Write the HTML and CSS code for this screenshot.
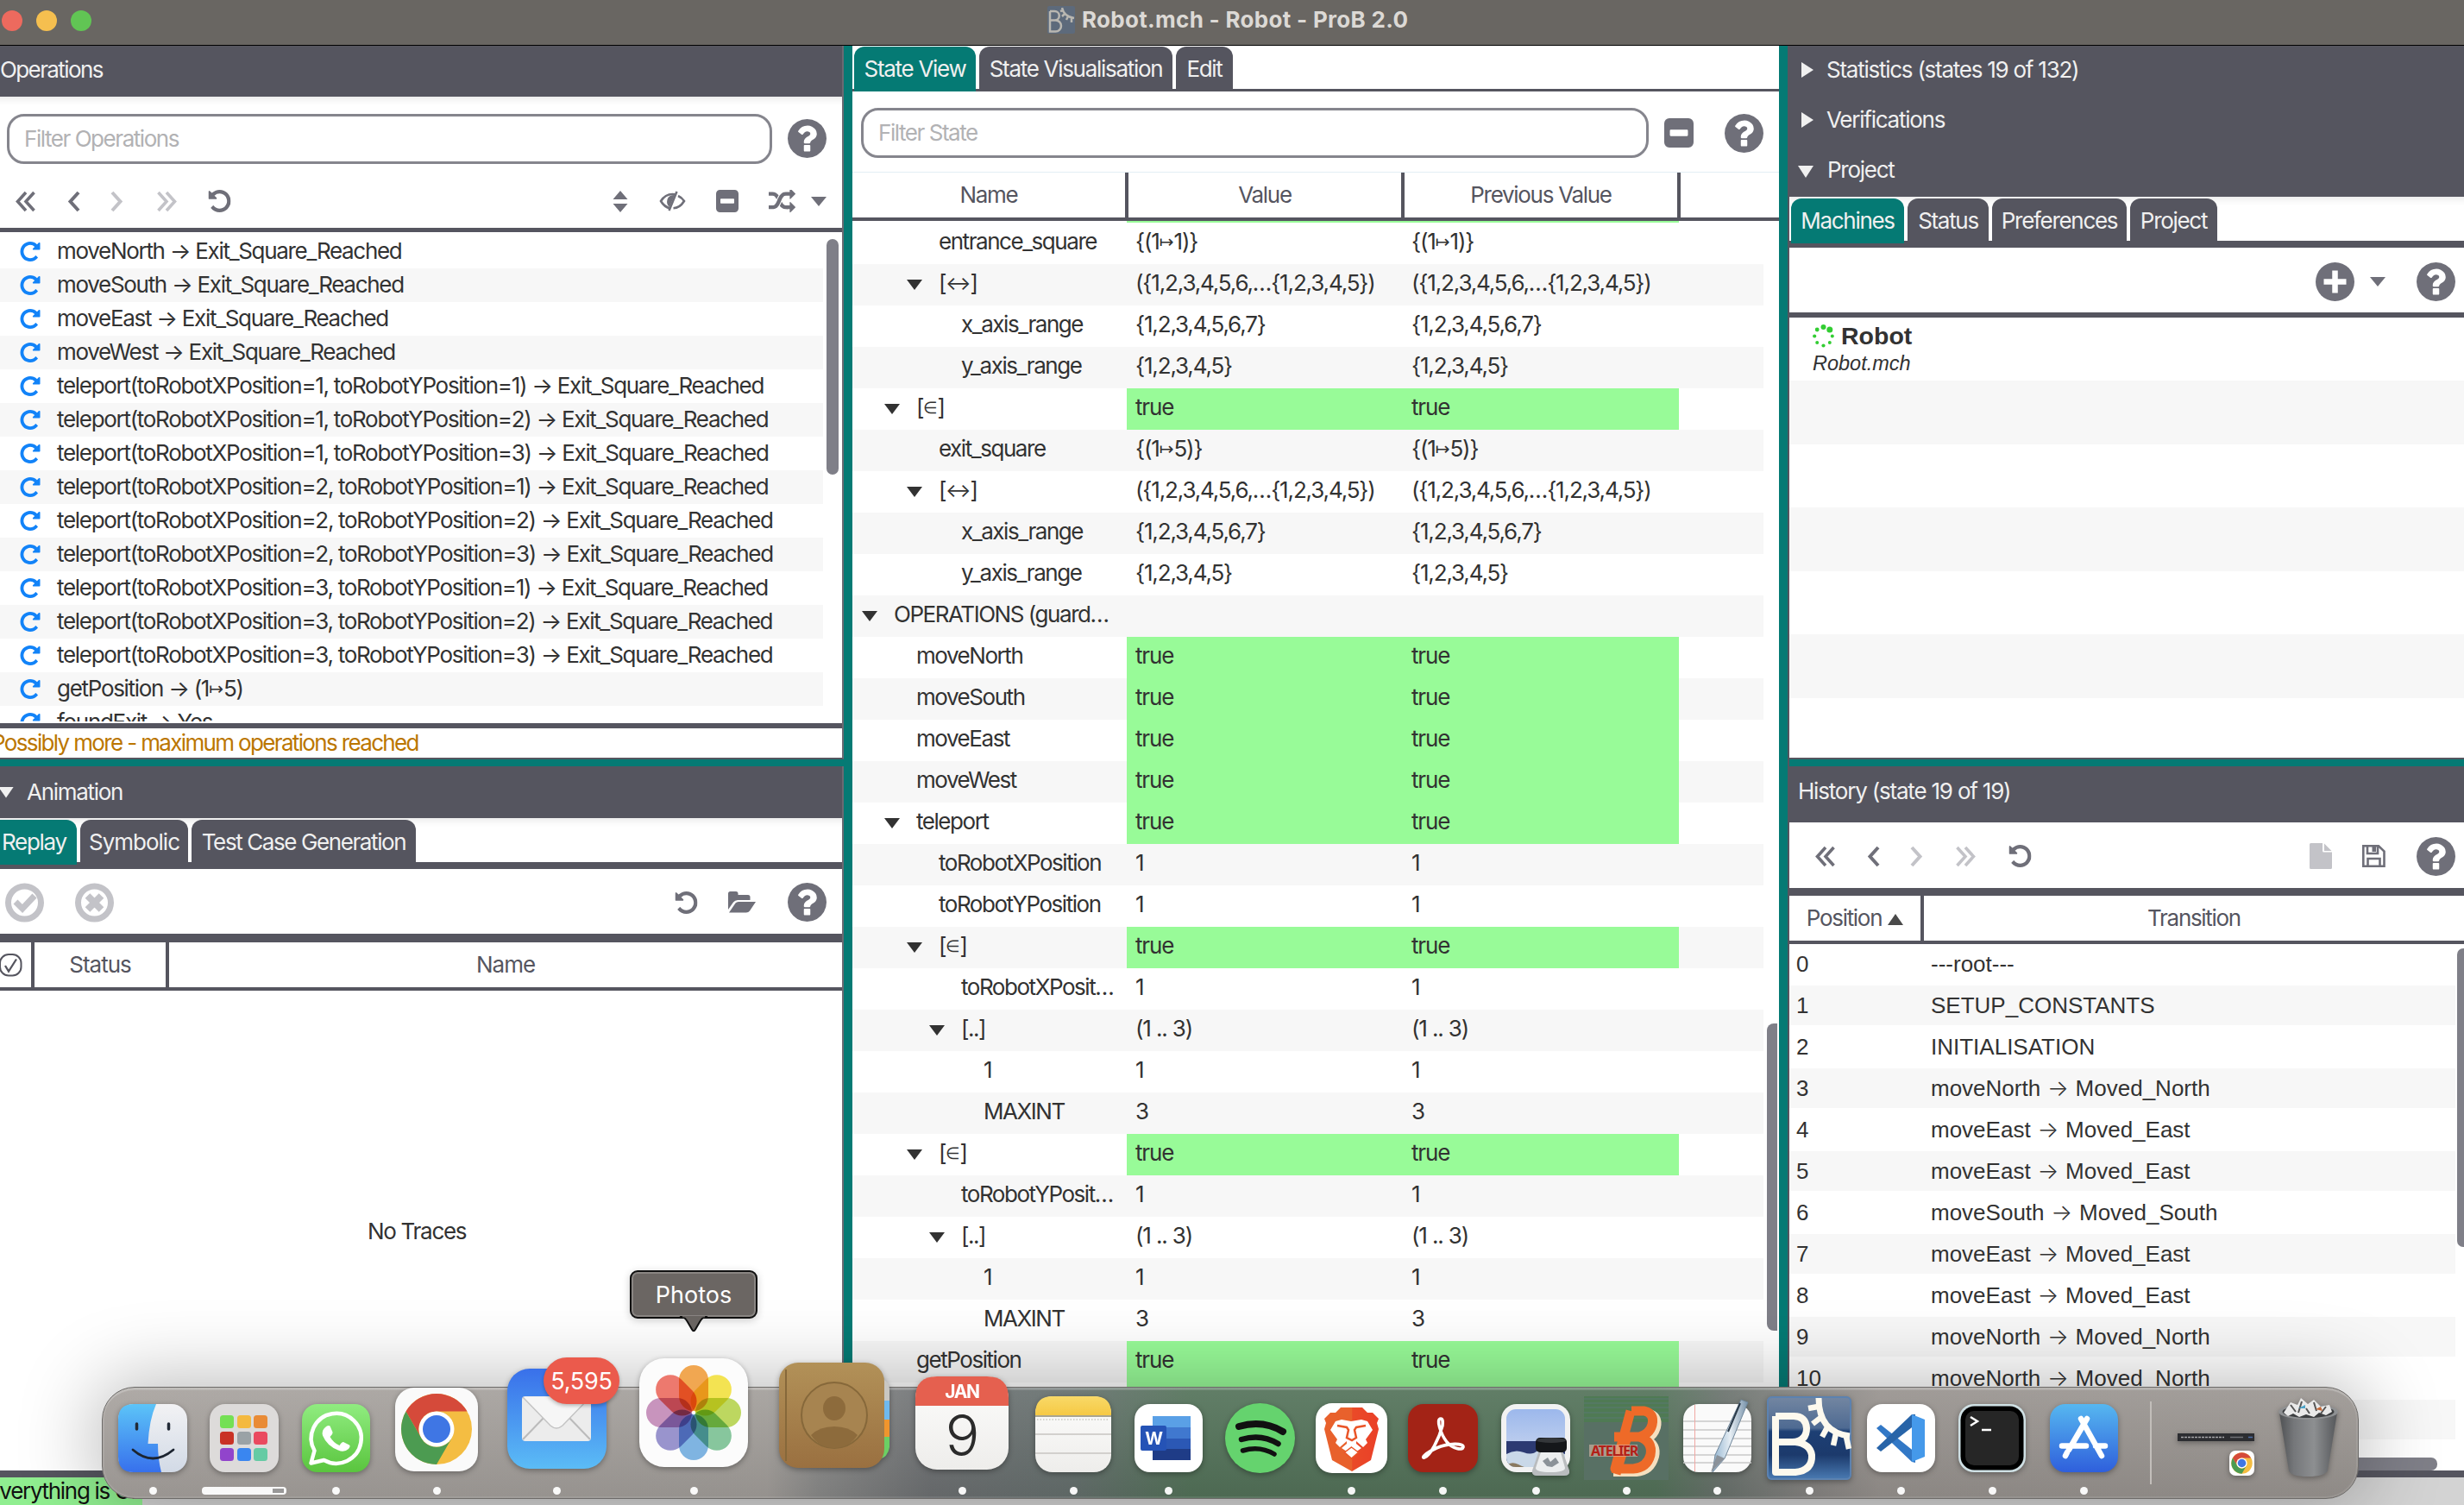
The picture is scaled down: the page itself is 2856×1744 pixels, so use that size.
FILE: index.html
```html
<!DOCTYPE html>
<html lang="en">
<head>
<meta charset="utf-8">
<title>Robot.mch - Robot - ProB 2.0</title>
<link rel="stylesheet" href="styles.css">
</head>
<body>
<svg class="defs" width="0" height="0" aria-hidden="true">
  <defs>
    <symbol id="help" viewBox="128 128 1536 1536"><path fill-rule="evenodd" d="M1024 1376v-192q0-14-9-23t-23-9h-192q-14 0-23 9t-9 23v192q0 14 9 23t23 9h192q14 0 23-9t9-23zm256-672q0-88-55.500-163t-138.500-116-170-41q-243 0-371 213-15 24 8 42l132 100q7 6 19 6 16 0 25-12 53-68 86-92 34-24 86-24 48 0 85.500 26t37.500 59q0 38-20 61t-68 45q-63 28-115.500 86.500t-52.500 125.500v36q0 14 9 23t23 9h192q14 0 23-9t9-23q0-19 21.500-49.500t54.500-49.500q32-18 49-28.500t46-35 44.500-48 28-60.500 12.500-81zm384 192q0 209-103 385.500t-279.500 279.500-385.500 103-385.500-103-279.500-279.500-103-385.500 103-385.500 279.500-279.500 385.500-103 385.500 103 279.500 279.500 103 385.500z"/></symbol>
    <symbol id="repeat" viewBox="128 128 1536 1536"><path d="M1664 256v448q0 26-19 45t-45 19h-448q-42 0-59-40-17-39 14-69l138-138q-148-137-349-137-104 0-198.500 40.500t-163.500 109.500-109.500 163.500-40.500 198.500 40.500 198.500 109.500 163.500 163.500 109.500 198.500 40.500q119 0 225-52t179-147q7-10 23-12 15 0 25 9l137 138q9 8 9.500 20.500t-7.500 22.500q-109 132-264 204.500t-327 72.500q-156 0-298-61t-245-164-164-245-61-298 61-298 164-245 245-164 298-61q147 0 284.500 55.500t244.500 156.500l130-129q29-31 70-14 39 17 39 59z"/></symbol>
    <symbol id="undo" viewBox="0 0 26 26"><g transform="translate(26 0) scale(-1 1)"><use href="#repeat" width="26" height="26"/></g></symbol>
    <symbol id="shuffle" viewBox="0 128 1792 1536"><path d="M666 481q-60 92-137 273-22-45-37-72.500t-40.500-63.500-51-56.500-63-35-81.500-14.500h-224q-14 0-23-9t-9-23v-192q0-14 9-23t23-9h224q250 0 410 225zm1126 799q0 14-9 23l-320 320q-9 9-23 9-13 0-22.500-9.500t-9.500-22.500v-192q-32 0-85 .5t-81 1-73-1-71-5-64-10.500-63-18.500-58-28.500-59-40-55-53.500-56-69.500q59-93 136-273 22 45 37 72.500t40.500 63.500 51 56.500 63 35 81.500 14.500h256v-192q0-14 9-23t23-9q12 0 24 10l319 319q9 9 9 23zm0-896q0 14-9 23l-320 320q-9 9-23 9-13 0-22.500-9.500t-9.500-22.500v-192h-256q-48 0-87 15t-69 45-51 61.500-45 77.500q-32 62-78 171-29 66-49.500 111t-54 105-64 100-74 83-90 68.500-106.500 42-128 16.500h-224q-14 0-23-9t-9-23v-192q0-14 9-23t23-9h224q48 0 87-15t69-45 51-61.500 45-77.500q32-62 78-171 29-66 49.500-111t54-105 64-100 74-83 90-68.500 106.500-42 128-16.500h256v-192q0-14 9-23t23-9q12 0 24 10l319 319q9 9 9 23z"/></symbol>
    <symbol id="left" viewBox="0 0 15 25"><path d="M13 2 3.500 12.500 13 23" fill="none" stroke="currentColor" stroke-width="4"/></symbol>
    <symbol id="right" viewBox="0 0 15 25"><path d="M2 2 11.500 12.500 2 23" fill="none" stroke="currentColor" stroke-width="4"/></symbol>
    <symbol id="left2" viewBox="0 0 25 25"><path d="M13 2 3.500 12.500 13 23M22.500 2 13 12.500 22.500 23" fill="none" stroke="currentColor" stroke-width="3.600"/></symbol>
    <symbol id="right2" viewBox="0 0 25 25"><path d="M12 2 21.500 12.500 12 23M2.500 2 12 12.500 2.500 23" fill="none" stroke="currentColor" stroke-width="3.600"/></symbol>
    <symbol id="minus" viewBox="0 0 26 26"><path fill-rule="evenodd" d="M4.500 0h17A4.500 4.500 0 0 1 26 4.500v17a4.500 4.500 0 0 1-4.500 4.500h-17A4.500 4.500 0 0 1 0 21.500v-17A4.500 4.500 0 0 1 4.500 0ZM5 11v4q0 .8.8.8h14.400q.8 0 .8-.8v-4q0-.8-.8-.8H5.800q-.8 0-.8.800Z"/></symbol>
    <symbol id="chrome" viewBox="0 0 84 84">
      <circle cx="42" cy="42" r="41" fill="#f4bd42"/>
      <path d="M6.500 21.500A41 41 0 0 1 77.500 21.500H42A20.500 20.500 0 0 0 24.200 52.300Z" fill="#d54a3a"/>
      <path d="M6.500 21.500A41 41 0 0 0 42 83L59.800 52.300A20.500 20.500 0 0 1 24.200 52.300Z" fill="#4c9b51"/>
      <circle cx="42" cy="42" r="20.500" fill="#fff"/><circle cx="42" cy="42" r="16" fill="#3f76e4"/>
    </symbol>
    <linearGradient id="gFinder" x2="0" y2="1"><stop stop-color="#5cc4f8"/><stop offset="1" stop-color="#3770ec"/></linearGradient>
    <linearGradient id="gFace" x2="0" y2="1"><stop stop-color="#f2f2f4"/><stop offset="1" stop-color="#d2dae6"/></linearGradient>
    <linearGradient id="gWhats" x2="0" y2="1"><stop stop-color="#90ec80"/><stop offset="1" stop-color="#5ac53e"/></linearGradient>
    <linearGradient id="gMail" x2="0" y2="1"><stop stop-color="#3970ea"/><stop offset="1" stop-color="#5bbcf6"/></linearGradient>
    <linearGradient id="gWood" x2="0" y2="1"><stop stop-color="#b29158"/><stop offset="1" stop-color="#9a7040"/></linearGradient>
    <linearGradient id="gPaper" x2="0" y2="1"><stop stop-color="#fdfdfc"/><stop offset="1" stop-color="#eeedeb"/></linearGradient>
    <linearGradient id="gNote" x2="0" y2="1"><stop stop-color="#f8d968"/><stop offset="1" stop-color="#f6c944"/></linearGradient>
    <linearGradient id="gLion"><stop stop-color="#e8612c"/><stop offset=".5" stop-color="#e8612c"/><stop offset=".52" stop-color="#ea4a28"/><stop offset="1" stop-color="#ea4028"/></linearGradient>
    <linearGradient id="gSky" x2="0" y2="1"><stop stop-color="#9cb8ec"/><stop offset="1" stop-color="#bccdee"/></linearGradient>
    <linearGradient id="gProb" x2="0" y2="1"><stop stop-color="#7487a2"/><stop offset=".38" stop-color="#4e6a92"/><stop offset=".42" stop-color="#1d3f74"/><stop offset=".7" stop-color="#1c3a6c"/><stop offset="1" stop-color="#4b7cb4"/></linearGradient>
    <linearGradient id="gStore" x2="0" y2="1"><stop stop-color="#56b7f0"/><stop offset="1" stop-color="#2f5fdc"/></linearGradient>
    <linearGradient id="gBin"><stop stop-color="#4f5153"/><stop offset=".25" stop-color="#75777a"/><stop offset=".6" stop-color="#8d8f91"/><stop offset="1" stop-color="#55575a"/></linearGradient>
    <linearGradient id="gPen"><stop stop-color="#8fb2cf"/><stop offset=".5" stop-color="#e6eef4"/><stop offset="1" stop-color="#7590a8"/></linearGradient>
  </defs>
</svg>

<header class="titlebar">
  <div class="lights"><i class="red"></i><i class="yellow"></i><i class="green"></i></div>
  <div class="title">
    <svg width="32" height="32" viewBox="0 0 32 32"><rect width="32" height="32" rx="2" fill="#5d6a7b"/><path d="M3 6V29.500H9.500A6.500 6.500 0 0 0 9.500 16.500H3M8.500 16.500A5 5 0 0 0 8.500 6H3" fill="none" stroke="#b9b7b1" stroke-width="2.500"/><path d="M17 2q2 10 14 12M18 5l-3 1M20 9l-3 3M24 12l-2 4M28 14l0 5" stroke="#b9b7b1" stroke-width="2.500" fill="none"/></svg>
    <span>Robot.mch - Robot - ProB 2.0</span>
  </div>
</header>

<main class="main">
  <div class="col left">
    <section class="ops">
      <div class="head plain">Operations</div>
      <div class="filter ops-filter"><div class="input">Filter Operations</div><svg class="ic" width="45" height="45"><use href="#help"/></svg></div>
      <div class="ops-tools ic">
        <svg width="25" height="25"><use href="#left2"/></svg>
        <svg width="15" height="25"><use href="#left"/></svg>
        <svg class="off" width="15" height="25"><use href="#right"/></svg>
        <svg class="off" width="25" height="25"><use href="#right2"/></svg>
        <svg width="27" height="26"><use href="#undo"/></svg>
        <svg width="18" height="25" viewBox="0 0 18 25"><path d="M9 0 17.500 10H.5ZM9 25 17.500 15H.5Z"/></svg>
        <svg width="31" height="24" viewBox="0 0 31 24"><path d="M13 20.500Q6 19 2 12 7 4 15.500 4 17 4 18 4.200M22 6Q26.500 8 29 12 24 20 16.500 20.300M20.500 1 11.500 23" fill="none" stroke="currentColor" stroke-width="2.600"/><path d="M18 5 12 19Q8 16 9.500 10 11 5 18 5Z"/></svg>
        <svg width="26" height="26"><use href="#minus"/></svg>
        <svg width="31" height="27"><use href="#shuffle"/></svg>
        <svg width="18" height="11" viewBox="0 0 18 11"><path d="M0 0H18L9 11Z"/></svg>
      </div>
      <div class="ops-list">
        <div class="rows">
          <div><svg><use href="#repeat"/></svg>moveNorth → Exit_Square_Reached</div>
          <div><svg><use href="#repeat"/></svg>moveSouth → Exit_Square_Reached</div>
          <div><svg><use href="#repeat"/></svg>moveEast → Exit_Square_Reached</div>
          <div><svg><use href="#repeat"/></svg>moveWest → Exit_Square_Reached</div>
          <div><svg><use href="#repeat"/></svg>teleport(toRobotXPosition=1, toRobotYPosition=1) → Exit_Square_Reached</div>
          <div><svg><use href="#repeat"/></svg>teleport(toRobotXPosition=1, toRobotYPosition=2) → Exit_Square_Reached</div>
          <div><svg><use href="#repeat"/></svg>teleport(toRobotXPosition=1, toRobotYPosition=3) → Exit_Square_Reached</div>
          <div><svg><use href="#repeat"/></svg>teleport(toRobotXPosition=2, toRobotYPosition=1) → Exit_Square_Reached</div>
          <div><svg><use href="#repeat"/></svg>teleport(toRobotXPosition=2, toRobotYPosition=2) → Exit_Square_Reached</div>
          <div><svg><use href="#repeat"/></svg>teleport(toRobotXPosition=2, toRobotYPosition=3) → Exit_Square_Reached</div>
          <div><svg><use href="#repeat"/></svg>teleport(toRobotXPosition=3, toRobotYPosition=1) → Exit_Square_Reached</div>
          <div><svg><use href="#repeat"/></svg>teleport(toRobotXPosition=3, toRobotYPosition=2) → Exit_Square_Reached</div>
          <div><svg><use href="#repeat"/></svg>teleport(toRobotXPosition=3, toRobotYPosition=3) → Exit_Square_Reached</div>
          <div><svg><use href="#repeat"/></svg>getPosition → (1<span class="map">↦</span>5)</div>
          <div><svg><use href="#repeat"/></svg>foundExit → Yes</div>
        </div>
        <div class="thumb"></div>
      </div>
      <div class="warn"><span>Possibly more - maximum operations reached</span></div>
    </section>
    <section class="anim">
      <div class="head open">Animation</div>
      <nav class="tabs anim-tabs"><span class="on">Replay</span><span>Symbolic</span><span>Test Case Generation</span></nav>
      <div class="anim-tools ic">
        <svg class="off" width="45" height="46" viewBox="0 0 45 46"><circle cx="22.500" cy="23" r="19" fill="none" stroke="currentColor" stroke-width="7"/><path d="m12 22 8 8 14-15" fill="none" stroke="currentColor" stroke-width="7"/></svg>
        <svg class="off" width="45" height="46" viewBox="0 0 45 46"><circle cx="22.500" cy="23" r="19" fill="none" stroke="currentColor" stroke-width="7"/><path d="m14.500 15 16 16m0-16-16 16" fill="none" stroke="currentColor" stroke-width="8"/></svg>
        <svg width="27" height="26"><use href="#undo"/></svg>
        <svg width="32" height="25" viewBox="0 0 32 25"><path d="M0 21V2.500Q0 0 2.500 0H9q2.500 0 2.500 2.500V4H23q2.500 0 2.500 2.500V10H11Q8 10 6 12.500L0 21ZM1 24.500 8.500 13.500Q9.700 12 12 12H32L25 22.500Q23.500 24.500 21 24.500Z"/></svg>
        <svg width="45" height="45"><use href="#help"/></svg>
      </div>
      <div class="thead anim-head"><span><svg width="27" height="27" viewBox="0 0 27 27"><rect x="1" y="1" width="24.500" height="24.500" rx="10" fill="none" stroke="currentColor" stroke-width="2"/><path d="m7 14 4 6.500L20 6.500" fill="none" stroke="currentColor" stroke-width="2.300"/></svg></span><span>Status</span><span>Name</span></div>
      <div class="empty">No Traces</div>
    </section>
  </div>

  <div class="col center">
    <nav class="tabs state-tabs"><span class="on">State View</span><span>State Visualisation</span><span>Edit</span></nav>
    <div class="filter state-filter"><div class="input">Filter State</div><svg class="ic" width="34" height="34"><use href="#minus"/></svg><svg class="ic" width="45" height="45"><use href="#help"/></svg></div>
    <div class="thead state-head"><span>Name</span><span>Value</span><span>Previous Value</span></div>
    <div class="state">
      <div class="srows">
        <div class="l2"><b>entrance_square</b><i>{(1<span class="map">↦</span>1)}</i><i>{(1<span class="map">↦</span>1)}</i></div>
        <div class="l2 o"><b>[<span class="both">↔</span>]</b><i>({1,2,3,4,5,6,…{1,2,3,4,5})</i><i>({1,2,3,4,5,6,…{1,2,3,4,5})</i></div>
        <div class="l3"><b>x_axis_range</b><i>{1,2,3,4,5,6,7}</i><i>{1,2,3,4,5,6,7}</i></div>
        <div class="l3"><b>y_axis_range</b><i>{1,2,3,4,5}</i><i>{1,2,3,4,5}</i></div>
        <div class="l1 o t"><b>[<span class="sym">∈</span>]</b><i>true</i><i>true</i></div>
        <div class="l2"><b>exit_square</b><i>{(1<span class="map">↦</span>5)}</i><i>{(1<span class="map">↦</span>5)}</i></div>
        <div class="l2 o"><b>[<span class="both">↔</span>]</b><i>({1,2,3,4,5,6,…{1,2,3,4,5})</i><i>({1,2,3,4,5,6,…{1,2,3,4,5})</i></div>
        <div class="l3"><b>x_axis_range</b><i>{1,2,3,4,5,6,7}</i><i>{1,2,3,4,5,6,7}</i></div>
        <div class="l3"><b>y_axis_range</b><i>{1,2,3,4,5}</i><i>{1,2,3,4,5}</i></div>
        <div class="l0 o"><b>OPERATIONS (guard…</b></div>
        <div class="l1 t"><b>moveNorth</b><i>true</i><i>true</i></div>
        <div class="l1 t"><b>moveSouth</b><i>true</i><i>true</i></div>
        <div class="l1 t"><b>moveEast</b><i>true</i><i>true</i></div>
        <div class="l1 t"><b>moveWest</b><i>true</i><i>true</i></div>
        <div class="l1 o t"><b>teleport</b><i>true</i><i>true</i></div>
        <div class="l2"><b>toRobotXPosition</b><i>1</i><i>1</i></div>
        <div class="l2"><b>toRobotYPosition</b><i>1</i><i>1</i></div>
        <div class="l2 o t"><b>[<span class="sym">∈</span>]</b><i>true</i><i>true</i></div>
        <div class="l3"><b>toRobotXPosit…</b><i>1</i><i>1</i></div>
        <div class="l3 o"><b>[..]</b><i>(1 .. 3)</i><i>(1 .. 3)</i></div>
        <div class="l4"><b>1</b><i>1</i><i>1</i></div>
        <div class="l4"><b>MAXINT</b><i>3</i><i>3</i></div>
        <div class="l2 o t"><b>[<span class="sym">∈</span>]</b><i>true</i><i>true</i></div>
        <div class="l3"><b>toRobotYPosit…</b><i>1</i><i>1</i></div>
        <div class="l3 o"><b>[..]</b><i>(1 .. 3)</i><i>(1 .. 3)</i></div>
        <div class="l4"><b>1</b><i>1</i><i>1</i></div>
        <div class="l4"><b>MAXINT</b><i>3</i><i>3</i></div>
        <div class="l1 t"><b>getPosition</b><i>true</i><i>true</i></div>
        <div class="l1 t"><b></b><i></i><i></i></div>
        <div class="l1"></div>
        <div class="l1"></div>
      </div>
      <div class="track"><div class="thumb"></div></div>
    </div>
  </div>

  <div class="col right">
    <section class="project">
      <div class="accordion">
        <div class="shut">Statistics (states 19 of 132)</div>
        <div class="shut">Verifications</div>
        <div class="open">Project</div>
      </div>
      <nav class="tabs proj-tabs"><span class="on">Machines</span><span>Status</span><span>Preferences</span><span>Project</span></nav>
      <div class="proj-tools ic">
        <svg width="45" height="45" viewBox="0 0 45 45"><circle cx="22.500" cy="22.500" r="22.500"/><path d="M22.500 9.500v26M9.500 22.500h26" stroke="#fff" stroke-width="6.500"/></svg>
        <svg width="18" height="11" viewBox="0 0 18 11"><path d="M0 0H18L9 11Z"/></svg>
        <svg width="45" height="45"><use href="#help"/></svg>
      </div>
      <div class="machines">
        <div class="machine">
          <div class="mname"><svg width="25" height="27" viewBox="0 0 25 27" fill="#32cd32"><circle cx="12.500" cy="3" r="3"/><circle cx="19.800" cy="6" r="3.500"/><circle cx="22.800" cy="13.500" r="2"/><circle cx="19.800" cy="21" r="2"/><circle cx="12.500" cy="24.500" r="2.100"/><circle cx="5.200" cy="21" r="2"/><circle cx="2.200" cy="13.500" r="2.100"/><circle cx="5.200" cy="6" r="2.400"/></svg>Robot</div>
          <div class="mfile">Robot.mch</div>
        </div>
      </div>
    </section>
    <section class="history">
      <div class="head hist">History (state 19 of 19)</div>
      <div class="hist-tools ic">
        <svg width="25" height="25"><use href="#left2"/></svg>
        <svg width="15" height="25"><use href="#left"/></svg>
        <svg class="off" width="15" height="25"><use href="#right"/></svg>
        <svg class="off" width="25" height="25"><use href="#right2"/></svg>
        <svg width="27" height="26"><use href="#undo"/></svg>
        <svg class="off" width="26" height="30" viewBox="0 0 26 30"><path d="M0 1.500Q0 0 1.500 0H15v9q0 1.500 1.500 1.500H26V28.500q0 1.500-1.500 1.500h-23Q0 30 0 28.500ZM17 .5 25.500 9H17Z"/></svg>
        <svg width="27" height="26" viewBox="0 0 27 26"><path d="M1.300 1.300H19L25.500 7.500V24.700H1.300ZM6 1.500v8.500h12V1.500M6.500 24.500V16h14v8.500" fill="none" stroke="currentColor" stroke-width="2.600"/><path d="M11.500 2h4.500v6h-4.500z"/></svg>
        <svg width="45" height="45"><use href="#help"/></svg>
      </div>
      <div class="thead hist-head"><span>Position<svg width="18" height="13" viewBox="0 0 18 13"><path d="M9 0 18 13H0Z"/></svg></span><span>Transition</span></div>
      <div class="hist-body">
        <div class="hrows">
          <div><i>0</i>---root---</div>
          <div><i>1</i>SETUP_CONSTANTS</div>
          <div><i>2</i>INITIALISATION</div>
          <div><i>3</i>moveNorth <s>→</s> Moved_North</div>
          <div><i>4</i>moveEast <s>→</s> Moved_East</div>
          <div><i>5</i>moveEast <s>→</s> Moved_East</div>
          <div><i>6</i>moveSouth <s>→</s> Moved_South</div>
          <div><i>7</i>moveEast <s>→</s> Moved_East</div>
          <div><i>8</i>moveEast <s>→</s> Moved_East</div>
          <div><i>9</i>moveNorth <s>→</s> Moved_North</div>
          <div><i>10</i>moveNorth <s>→</s> Moved_North</div>
          <div></div>
          <div></div>
        </div>
        <div class="track"><div class="thumb"></div></div>
      </div>
      <div class="hscroll"><div></div></div>
    </section>
  </div>
</main>

<footer class="status"><span>Everything is OK 0</span></footer>

<div class="tip">Photos<svg width="36" height="20" viewBox="0 0 36 20"><path d="M2 0Q8 1 10.500 6L16 15.500Q18 19 20 15.500L25.500 6Q28 1 34 0" fill="#6b6663" stroke="#111" stroke-width="2"/><path d="M5 0H31" stroke="#6b6663" stroke-width="3"/></svg></div>

<div class="dock">
  <div class="app"><svg width="80" height="79" viewBox="0 0 80 79"><rect width="80" height="79" rx="18" fill="url(#gFace)"/><path d="M18 0H44Q36 18 34.500 46H46Q46 64 50 79H18Q0 79 0 61V18Q0 0 18 0Z" fill="url(#gFinder)"/><path d="M21.500 23v6M58.500 23v6" stroke="#222a36" stroke-width="3.500" stroke-linecap="round"/><path d="M17 53Q40 73 64 53" fill="none" stroke="#1c2430" stroke-width="2.800" stroke-linecap="round"/></svg><em></em></div>
  <div class="app"><svg width="80" height="79" viewBox="0 0 80 79"><rect width="80" height="79" rx="18" fill="#dddbda"/><g><rect x="12" y="13" width="16" height="15" rx="3.500" fill="#74e054"/><rect x="32" y="13" width="16" height="15" rx="3.500" fill="#f4b93f"/><rect x="51" y="13" width="16" height="15" rx="3.500" fill="#e98b36"/><rect x="12" y="32" width="16" height="15" rx="3.500" fill="#c93225"/><rect x="32" y="32" width="16" height="15" rx="3.500" fill="#9aa2a6"/><rect x="51" y="32" width="16" height="15" rx="3.500" fill="#ea4a5f"/><rect x="12" y="51" width="16" height="15" rx="3.500" fill="#9144cc"/><rect x="32" y="51" width="16" height="15" rx="3.500" fill="#3a86f0"/><rect x="51" y="51" width="16" height="15" rx="3.500" fill="#65cba4"/></g></svg><em class="progress"></em></div>
  <div class="app"><svg width="79" height="79" viewBox="0 0 79 79"><rect width="79" height="79" rx="18" fill="url(#gWhats)"/><path d="M10.500 68.500 14.500 54A29 29 0 1 1 25.500 65Z" fill="none" stroke="#fff" stroke-width="4.500" stroke-linejoin="round"/><path d="M27 27q3-3 5.500-1.500l3 7q.5 2-3 5.500 4 7 11 10 2.500-4 4.500-4l7 3.500q1.500 1.500-1 4.500-5 4.500-12 1.500-13-5-18-17-1.500-6 3-9.500Z" fill="#fff"/></svg><em></em></div>
  <div class="app r1"><svg width="96" height="97" viewBox="0 0 96 97"><rect width="96" height="97" rx="22" fill="#fafafa"/><use href="#chrome" x="6" y="6" width="84" height="84"/></svg><em></em></div>
  <div class="app r4"><svg width="115" height="116" viewBox="0 0 115 116"><rect width="115" height="116" rx="26" fill="url(#gMail)"/><rect x="17" y="32" width="80" height="52" rx="4" fill="#ececec"/><path d="m18 82 26-27M96 82 70 55" stroke="#bbb" stroke-width="2"/><path d="M18 33 50 66q7 6 14 0L96 33" fill="#f6f6f6" stroke="#c4c4c4" stroke-width="1.500"/></svg><span class="badge">5,595</span><em></em></div>
  <div class="app r6"><svg width="126" height="126" viewBox="-63 -63 126 126"><rect x="-63" y="-63" width="126" height="126" rx="29" fill="#fcfcfc"/><g class="petals">
    <rect x="-17" y="-55" width="34" height="53" rx="17" fill="#f29a33"/>
    <rect x="-17" y="-55" width="34" height="53" rx="17" fill="#f5e234" transform="rotate(45)"/>
    <rect x="-17" y="-55" width="34" height="53" rx="17" fill="#b4d445" transform="rotate(90)"/>
    <rect x="-17" y="-55" width="34" height="53" rx="17" fill="#74c08e" transform="rotate(135)"/>
    <rect x="-17" y="-55" width="34" height="53" rx="17" fill="#6ba9df" transform="rotate(180)"/>
    <rect x="-17" y="-55" width="34" height="53" rx="17" fill="#8a84c8" transform="rotate(225)"/>
    <rect x="-17" y="-55" width="34" height="53" rx="17" fill="#c283b5" transform="rotate(270)"/>
    <rect x="-17" y="-55" width="34" height="53" rx="17" fill="#ee6356" transform="rotate(315)"/></g></svg><em></em></div>
  <div class="app r5"><svg width="128" height="122" viewBox="0 0 128 122"><path d="M112 18q16 0 16 14v12h-16z" fill="#c9c7c2"/><path d="M112 44h16v22h-16z" fill="#6fb9ee"/><path d="M112 66h16v20h-16z" fill="#f0952d"/><path d="M112 86h16v12q-2 12-12 14z" fill="#6ccf64"/><rect width="122" height="122" rx="22" fill="url(#gWood)"/><path d="M8 8v106" stroke="#86683a" stroke-width="2"/><circle cx="64" cy="61" r="38" fill="#a78450" stroke="#86683a" stroke-width="2"/><ellipse cx="64" cy="53" rx="13" ry="14" fill="#8d6b3c"/><path d="M37 84q10-10 27-10t27 10q-10 15-27 15T37 84Z" fill="#8d6b3c"/></svg><em class="none"></em></div>
  <div class="app r3"><svg width="108" height="108" viewBox="0 0 108 108"><rect width="108" height="108" rx="25" fill="url(#gPaper)"/><path d="M0 34V25Q0 0 25 0H83Q108 0 108 25V34Z" fill="#e5604f"/><text x="54" y="25" text-anchor="middle" font-family="Inter" font-weight="700" font-size="21" fill="#fff">JAN</text><text x="54" y="92" text-anchor="middle" font-family="Inter" font-weight="300" font-size="66" fill="#2b2b2b">9</text></svg><em></em></div>
  <div class="app"><svg width="88" height="88" viewBox="0 0 88 88"><rect width="88" height="88" rx="20" fill="url(#gPaper)"/><path d="M0 22V20Q0 0 20 0H68Q88 0 88 20V22Z" fill="url(#gNote)"/><path d="M0 23h88" stroke="#a9a591" stroke-width="2"/><path d="M2 27h84" stroke="#c8c6c0" stroke-width="1.500" stroke-dasharray="1.500 2"/><path d="M0 44h88M0 66h88" stroke="#d2d0cd" stroke-width="2"/></svg><em></em></div>
  <div class="app"><svg width="79" height="79" viewBox="0 0 79 79"><rect width="79" height="79" rx="18" fill="#fff"/><path d="M21 14h44v13H21z" fill="#5aa0e6"/><path d="M21 27h44v13H21z" fill="#4078cf"/><path d="M21 40h44v12H21z" fill="#2b58b5"/><path d="M21 52h44v13H21z" fill="#1f3c87"/><rect x="7" y="25" width="30" height="29" rx="2" fill="#2553b6"/><text x="22" y="47" text-anchor="middle" font-family="Inter" font-weight="700" font-size="20" fill="#fff">W</text></svg><em></em></div>
  <div class="app low"><svg width="81" height="81" viewBox="0 0 81 81"><circle cx="40.500" cy="40.500" r="40.500" fill="#65d36e"/><path d="M16 27Q44 19 67 33" stroke="#111" stroke-width="8" fill="none" stroke-linecap="round"/><path d="M19 42Q42 35 61.500 47" stroke="#111" stroke-width="6.500" fill="none" stroke-linecap="round"/><path d="M20.500 55Q40 49 57 59" stroke="#111" stroke-width="5.500" fill="none" stroke-linecap="round"/></svg><em class="none"></em></div>
  <div class="app low"><svg width="83" height="81" viewBox="0 0 83 81"><rect width="83" height="81" rx="19" fill="#fff"/><path d="M29 5H54L60 11H66L73 18 71 23 73 30 64 66 42 79 19 66 10 30 12 23 10 18 17 11H23Z" fill="url(#gLion)"/><path d="M23 21 30 19 41 21 53 19 60 21 66 31 58 42 60 46 55 51 47 44 47 47 53 52 42 60 30 52 36 47 36 44 28 51 23 46 25 42 17 31Z" fill="#fff"/><path d="M25 26 36 28 38 31 36 40 42 43 47 40 45 31 47 28 58 26" stroke="#ea5528" stroke-width="2.500" fill="none"/><path d="m41.500 51 8 6-8 7-8-7Z" fill="#fff" stroke="#ea5528" stroke-width="1.500"/></svg><em></em></div>
  <div class="app"><svg width="81" height="79" viewBox="0 0 81 79"><rect width="81" height="79" rx="18" fill="#a32316"/><path d="M38 17C32 17 38 35 45 44 52 52 63 54 64 50 65 45 47 45 33 51 20 57 15 63 19 62 26 60 36 40 40 25Q41 17 38 17Z" fill="none" stroke="#fff" stroke-width="3.600"/></svg><em></em></div>
  <div class="app sunk"><svg width="80" height="84" viewBox="0 0 80 84"><rect width="80" height="79" rx="18" fill="#f2f2f2"/><clipPath id="pv"><rect x="6" y="6" width="68" height="67" rx="11"/></clipPath><g clip-path="url(#pv)"><path d="M6 6h68v40H6z" fill="url(#gSky)"/><path d="M6 43h68v34H6z" fill="#2c3a72"/><path d="M6 58q10-6 20-2t16-2 32 4v20H6z" fill="#c9d8e8"/><path d="M6 71q6-5 14-1t14 5H6z" fill="#8a7a60"/></g><path d="M44 54h27l8 23q1 6-6 6H41q-6 0-5-6Z" fill="#b9bcbe"/><path d="M46 56h23l5 18q0 5-17 5t-17-5Z" fill="#eceeef"/><path d="m48 66 6-4 3 5 6-5 4 6-8 5-6-1z" fill="#8b9298"/><rect x="40" y="39" width="36" height="17" rx="5" fill="#15171a"/><ellipse cx="58" cy="42" rx="17" ry="3" fill="#34373a"/></svg><em></em></div>
  <div class="app deep flat"><svg width="98" height="97" viewBox="0 0 98 97"><rect width="98" height="97" fill="#587064"/><path d="M0 0h98v30H0z" fill="#4f7a54"/><path d="M0 3h98M0 8h98M0 13h98M0 19h98M0 25h98" stroke="#577a68" stroke-width="1.500"/><path d="M57 18H74Q88 22 85 36 82 46 74 50 86 56 83 70 78 88 61 89H34" fill="none" stroke="#f6dfbf" stroke-width="8" stroke-linejoin="round"/><path d="M37 90 50 47M35 47H66M55 17H70Q82 20 79 33 76 44 64 47 80 52 77 68 73 83 57 84H36L54 17" fill="none" stroke="#ee6a28" stroke-width="11" stroke-linejoin="round"/><rect x="6" y="56" width="56" height="14" fill="#dcb9a8" opacity=".6"/><text x="8" y="68.500" font-family="Noto Sans" font-weight="700" font-size="16" textLength="54" lengthAdjust="spacingAndGlyphs" fill="#b32018">ATELIER</text></svg><em></em></div>
  <div class="app"><svg width="79" height="86" viewBox="0 0 79 86"><rect y="7" width="79" height="79" rx="18" fill="#fafafa"/><path d="M0 27h79M0 37h79M0 47h79M0 56h79M0 66h79M0 75h79" stroke="#c9c9c9" stroke-width="1.500"/><path d="M13.500 8v77" stroke="#f0a8a4"/><path d="M67 2 75 5 48 70 34 86 37 66Z" fill="url(#gPen)" stroke="#70879b" stroke-width="1"/><path d="M39 66 48 70 32 86Z" fill="#8b929a"/><path d="M66 6 52 39" stroke="#2b3b4a" stroke-width="2"/></svg><em></em></div>
  <div class="app deep"><svg width="98" height="97" viewBox="0 0 98 97"><rect width="98" height="97" rx="6" fill="url(#gProb)"/><rect x="1" y="1" width="96" height="95" rx="5" fill="none" stroke="#5c82b0" stroke-width="2"/><path d="M10 23V88H33Q53 86 52 68 50 55 33 53H10M30 53Q46 52 46 37 45 23 31 23H10" fill="none" stroke="#fdf9ee" stroke-width="8" stroke-linejoin="round"/><path d="M60 2Q60 42 96 46" fill="none" stroke="#fdf9ee" stroke-width="7"/><path d="m59 12-11 2M62 25l-9 7M70 36l-6 11M80 43l-3 14M92 47l3 14" stroke="#fdf9ee" stroke-width="6.500"/></svg><em></em></div>
  <div class="app"><svg width="79" height="79" viewBox="0 0 79 79"><rect width="79" height="79" rx="18" fill="#fff"/><path d="M11 28 16 24 56 56V68L52 67Z" fill="#3278c6"/><path d="M11 51 16 55 56 24V12L52 12Z" fill="#2864a8"/><path d="M52 12 67 18V61L52 67Z" fill="#4599ea"/></svg><em></em></div>
  <div class="app"><svg width="78" height="79" viewBox="0 0 78 79"><rect width="78" height="79" rx="18" fill="#cfe0e4"/><rect x="2.500" y="2.500" width="73" height="74" rx="16" fill="#000"/><rect x="8" y="8" width="62" height="63" rx="10" fill="#262626"/><path d="m14 15 8 5-8 5" fill="none" stroke="#fff" stroke-width="2.500"/><path d="M27 30h11" stroke="#fff" stroke-width="2.500"/></svg><em></em></div>
  <div class="app"><svg width="79" height="79" viewBox="0 0 79 79"><rect width="79" height="79" rx="18" fill="url(#gStore)"/><path d="M43 17 22 53M36 17 60 60M14 48.500H42M53 48.500H64M20 56 18 60" fill="none" stroke="#fff" stroke-width="6.500" stroke-linecap="round"/></svg><em></em></div>
  <div class="sep"></div>
  <div class="app mini"><svg width="90" height="50" viewBox="0 0 90 50"><rect width="89" height="9" fill="#2c2d31"/><path d="M4 4.500h50" stroke="#a6a7aa" stroke-width="1.500" stroke-dasharray="3 1"/><path d="M61 4.500h15" stroke="#6f7176" stroke-width="1.500"/><path d="M82 4.500h5" stroke="#4e6fa8" stroke-width="1.500"/><rect x="60" y="20" width="29" height="29" rx="7" fill="#fff"/><use href="#chrome" x="62" y="22" width="25" height="25"/></svg></div>
  <div class="app bin"><svg width="71" height="91" viewBox="0 0 71 91"><path d="M2 17 13 84Q15 91 35 91T58 84L69 17Z" fill="url(#gBin)"/><ellipse cx="35.500" cy="16" rx="34.500" ry="9" fill="#8e9092"/><ellipse cx="35.500" cy="16" rx="30" ry="7" fill="#3c3e40"/><path d="m7 17 8-12 8 3 4-8 8 7 7-5 8 8 10-2 3 8-7 4-8-3-6 5-9-3-8 3-7-4-6 3Z" fill="#e9e9e9"/><path d="m15 8 6 8M28 4l-4 13M42 5l3 10M56 10l-6 8M33 12l4 6" stroke="#555" stroke-width="2"/><path d="m24 12 8-4v4z" fill="#4aa3c8"/><path d="m44 13 6-3 2 5z" fill="#c56a3a"/></svg></div>
</div>
</body>
</html>
```

FILE: styles.css
```css
* { box-sizing: border-box; }

body {
  margin: 0;
  width: 2856px;
  height: 1744px;
  overflow: hidden;
  position: relative;
  display: flex;
  flex-direction: column;
  font-family: Inter, "DejaVu Sans", sans-serif;
  font-size: 26px;
  letter-spacing: -1.3px;
  line-height: 1;
  color: #323232;
  white-space: nowrap;
  background: #d3d3d3;
}

i, em { font-style: normal; }
b { font-weight: 400; }
s { text-decoration: none; }
.defs { position: absolute; }
svg { display: block; flex: none; }

/* title bar */
.titlebar {
  height: 53px;
  border-bottom: 1px solid #000;
  background: #696662;
  display: flex;
  align-items: center;
}
.lights { display: flex; gap: 16px; padding-left: 2px; margin-top: -4px; width: 1214px; }
.lights i { width: 24px; height: 24px; border-radius: 50%; }
.red { background: #ed6a5e; }
.yellow { background: #f5bf4f; }
.green { background: #61c554; }
.title {
  display: flex;
  align-items: center;
  gap: 8px;
  margin-top: -7px;
  font-weight: 700;
  letter-spacing: 0.3px;
  color: #dcd9d5;
}

/* window body */
.main {
  height: 1659px;
  background: #057a74;
  display: grid;
  grid-template-columns: 978px 1074px 784px;
  column-gap: 10px;
}
.col { display: flex; flex-direction: column; min-width: 0; overflow: hidden; }
.left, .right { gap: 8px; }
.left section { border-right: 2px solid #6a6a73; background: #fff; display: flex; flex-direction: column; overflow: hidden; }
.right section { background: #fff; display: flex; flex-direction: column; overflow: hidden; }

.ic { color: #6f6f79; fill: currentColor; }
.off { color: #c3c3c8; fill: currentColor; }

.head { background: #55555f; color: #f0f0f0; display: flex; align-items: center; flex: none; margin-right: -2px; }
.plain { height: 59px; padding-bottom: 3px; letter-spacing: -1.6px; }

.filter { display: flex; align-items: center; flex: none; letter-spacing: -1.45px; }
.input {
  height: 58px;
  border: 3px solid #85858d;
  border-radius: 20px;
  color: #b2b2b4;
  display: flex;
  align-items: center;
}

.tabs { display: flex; gap: 4px; flex: none; align-items: flex-start; background: #fff; }
.tabs span {
  height: 50px;
  border-radius: 12px 12px 0 0;
  background: #55555f;
  color: #f0f0f0;
  display: flex;
  align-items: center;
  justify-content: center;
  padding-top: 1px;
}
.tabs .on { background: #057a74; height: 52px; padding-bottom: 1px; }

.thead { display: grid; flex: none; background: #fff; color: #55555f; letter-spacing: -1.3px; }
.thead span { display: flex; align-items: center; justify-content: center; border-right: 4px solid #55555f; }
.thead span:last-child { border-right: 0; }
.thumb { background: #7f7f88; border-radius: 8px; }

.shut, .open { display: flex; align-items: center; }
.open::before { content: ""; width: 18px; height: 14px; background: #f0f0f0; clip-path: polygon(0 0, 100% 0, 50% 100%); }
.shut::before { content: ""; width: 14px; height: 18px; background: #f0f0f0; clip-path: polygon(0 0, 100% 50%, 0 100%); }

/* operations */
.ops { height: 827px; border-bottom: 2px solid #55555f; }
.ops-filter { height: 96px; padding: 1px 0 0 8px; gap: 18px; box-shadow: inset 0 12px 10px -10px #0000001c; }
.ops-filter .input { width: 887px; padding-left: 17px; }
.ops-tools {
  height: 56px;
  padding: 0 0 6px 17px;
  display: grid;
  align-items: center;
  grid-template-columns: 61px 50px 53px 60px 469px 54px 66px 61px 49px 18px;
}
.ops-list { height: 574px; border-top: 5px solid #55555f; flex: none; padding-top: 3px; display: flex; overflow: hidden; }
.rows { width: 954px; height: 564px; overflow: hidden; flex: none; }
.rows div { height: 39px; display: flex; align-items: center; padding: 0 0 1px 23px; letter-spacing: -1.3px; }
.rows div:nth-child(even) { background: #f7f7f7; }
.rows svg { width: 24px; height: 23px; margin-right: 19px; fill: #1283f8; }
.ops-list .thumb { width: 14px; height: 273px; margin: 5px 0 0 4px; }
.warn {
  border-top: 6px solid #55555f;
  flex: 1;
  display: flex;
  align-items: center;
  color: #bb7600;
  letter-spacing: -1.65px;
}
.warn span { margin-left: -10px; }
.map { font-family: "DejaVu Sans", sans-serif; font-size: 20px; letter-spacing: 0; }
.sym { font-family: "DejaVu Sans", sans-serif; font-size: 19px; letter-spacing: 0; }
.both { font-size: 22px; letter-spacing: -1px; }

/* animation */
.anim { flex: 1; }
.anim .head { height: 60px; padding: 0 0 1px; }
.anim .head::before { margin: 1px 15px 0 -2px; height: 13px; }
.anim-tabs { height: 59px; padding-top: 2px; border-bottom: 8px solid #55555f; box-shadow: inset 0 12px 10px -10px #0000001c; }
.anim-tabs .on { width: 89px; justify-content: flex-start; padding-left: 2px; border-top-left-radius: 0; }
.anim-tabs span:nth-child(2) { width: 125px; letter-spacing: -1px; }
.anim-tabs span:nth-child(3) { width: 260px; letter-spacing: -1.4px; }
.anim-tools {
  height: 75px;
  display: grid;
  align-items: center;
  padding: 2px 0 0 6px;
  grid-template-columns: 81px 695px 62px 69px 45px;
}
.anim-head {
  border-top: 10px solid #55555f;
  border-bottom: 4px solid #55555f;
  height: 66px;
  grid-template-columns: 40px 156px 1fr;
  letter-spacing: -1px;
}
.anim-head span:first-child { justify-content: flex-start; }
.anim-head svg { margin-left: -1px; }
.empty { padding: 266px 0 0 426px; color: #323232; letter-spacing: -1.3px; }

/* state view */
.center { background: #fff; }
.state-tabs { height: 53px; padding: 1px 0 0 2px; border-bottom: 3px solid #55555f; }
.state-tabs .on { width: 141px; }
.state-tabs span:nth-child(2) { width: 224px; }
.state-tabs span:nth-child(3) { width: 66px; }
.state-filter { height: 94px; padding: 3px 0 0 10px; border-bottom: 1px solid #e3eef5; }
.state-filter .input { width: 913px; padding-left: 17px; margin-right: 18px; }
.state-filter svg + svg { margin-left: 36px; }
.state-head { height: 56px; border-bottom: 4px solid #55555f; grid-template-columns: 320px 320px 320px; }
.state-head span:last-child { border-right: 4px solid #55555f; }
.state { flex: 1; display: flex; overflow: hidden; background: #fff; margin-right: 2px; }
.srows {
  width: 1056px;
  padding-top: 2px;
  flex: none;
  background: linear-gradient(#98fb98, #98fb98) 318px 0 / 640px 2px no-repeat;
}
.srows > div { height: 48px; display: grid; grid-template-columns: 318px 320px 320px; }
.srows > div:nth-child(even) { background: #f7f7f7; }
.srows b { display: flex; align-items: center; letter-spacing: -1.45px; padding-bottom: 4px; }
.srows i { display: flex; align-items: center; padding: 0 0 4px 10px; letter-spacing: -1.15px; }
.srows .t i { background: #98fb98; }
.l0 b { padding-left: 48px; }
.l1 b { padding-left: 74px; }
.l2 b { padding-left: 100px; }
.l3 b { padding-left: 126px; }
.l4 b { padding-left: 152px; }
.o b::before {
  content: "";
  width: 18px;
  height: 12px;
  margin: 4px 19px 0 -37px;
  background: #323232;
  clip-path: polygon(0 0, 100% 0, 50% 100%);
}
.state .track { width: 16px; display: flex; justify-content: flex-end; }
.state .thumb { width: 12px; height: 356px; margin-top: 930px; border-radius: 8px 0 0 8px; }

/* project */
.right { border-left: 2px solid #55555f; }
.project { height: 827px; border-bottom: 2px solid #55555f; }
.accordion { height: 175px; background: #55555f; color: #f0f0f0; padding-bottom: 2px; }
.accordion div { height: 58px; padding-bottom: 2px; letter-spacing: -1.25px; }
.accordion .shut::before { margin: 0 15px 0 14px; }
.accordion .open::before { margin: 4px 16px 0 10px; }
.proj-tabs { height: 59px; padding: 2px 0 0 2px; border-bottom: 8px solid #55555f; box-shadow: inset 0 12px 10px -10px #0000001c; }
.proj-tabs .on { width: 131px; }
.proj-tabs span:nth-child(2) { width: 94px; }
.proj-tabs span:nth-child(3) { width: 156px; }
.proj-tabs span:nth-child(4) { width: 101px; }
.proj-tools {
  height: 75px;
  display: grid;
  align-items: center;
  padding: 3px 0 0 610px;
  grid-template-columns: 63px 54px 45px;
}
.machines {
  flex: 1;
  border-top: 6px solid #55555f;
  background: repeating-linear-gradient(#fff 0 73px, #f7f7f7 73px 147px);
}
.machine { padding: 6px 0 0 27px; font-family: "Liberation Sans", Arial, sans-serif; letter-spacing: 0; }
.mname { display: flex; align-items: center; gap: 8px; font-size: 28.5px; font-weight: 700; height: 30px; }
.mfile { font-size: 23.5px; font-style: italic; padding-top: 6px; }

/* history */
.history { flex: 1; }
.hist { height: 65px; padding: 0 0 7px 10px; letter-spacing: -1.2px; }
.hist-tools {
  height: 76px;
  display: grid;
  align-items: center;
  padding: 3px 0 0 29px;
  grid-template-columns: 61px 50px 52px 62px 349px 61px 63px 45px;
}
.hist-head { height: 65px; border-top: 9px solid #55555f; border-bottom: 4px solid #55555f; grid-template-columns: 156px 1fr; }
.hist-head svg { margin: 4px 0 0 7px; fill: #4a4a4a; }
.hist-body { height: 596px; display: flex; overflow: hidden; }
.hrows { width: 772px; font-family: "Liberation Sans", Arial, sans-serif; letter-spacing: 0; }
.hrows div { height: 46px; margin-bottom: 2px; display: flex; align-items: center; white-space: pre; }
.hrows div:nth-child(odd) { height: 48px; padding-bottom: 1px; margin-bottom: 0; }
.hrows div:nth-child(even) { background: #f7f7f7; }
.hrows i { width: 164px; padding-left: 8px; }
.hrows s { font-family: Inter, sans-serif; font-weight: 300; width: 26px; display: flex; justify-content: center; }
.history .track { flex: 1; display: flex; justify-content: flex-end; }
.history .thumb { width: 8px; height: 346px; margin-top: 5px; border-radius: 7px 0 0 7px; }
.hscroll { height: 15px; display: flex; }
.hscroll div { width: 751px; background: #7f7f88; border-radius: 7px; }

/* status bar */
.status { height: 32px; display: flex; color: #111; }
.status span {
  background: linear-gradient(90deg, #90ee90 165px, transparent 165px);
  width: 220px;
  padding-top: 3px;
  text-indent: -15px;
  letter-spacing: -1.3px;
}
.left .anim, .right .history { border-bottom: 8px solid #55555f; }

/* dock */
.dock {
  position: absolute;
  left: 118px;
  top: 1607px;
  width: 2616px;
  height: 130px;
  border-radius: 38px;
  padding: 0 0 0 18px;
  display: grid;
  align-items: end;
  grid-template-rows: 128px;
  grid-template-columns: 106px 107px 108px 130px 153px 162px 158px 139px 115px 105px 105px 107px 108px 96px 115px 97px 116px 106px 106px 116px 32px 116px 70px;
  border: 1px solid #6d6b69;
  background:
    linear-gradient(#ffffff14, #00000016),
    linear-gradient(90deg, #a8a39f 0, #a39f9b 770px, #8b8b8a 830px, #6e7173 960px, #66706e 1120px, #54735a 1260px, #54735a 1800px, #6b736e 1880px, #868482 1980px, #98938f 2060px, #9c9793 2616px);
  box-shadow: inset 0 5px 0 -2px #ffffff28, inset 0 0 0 2px #ffffff18, 0 0 90px 6px #00000048;
}
.app { position: relative; justify-self: start; display: flex; flex-direction: column; align-items: center; }
.app > svg { filter: drop-shadow(0 2px 3px #0005); margin-bottom: 17px; }
.flat > svg { filter: none; }
.app em { width: 9px; height: 9px; border-radius: 50%; background: #fff; margin-bottom: 4px; opacity: .95; }
.app .none { visibility: hidden; }
.app .progress { width: 98px; height: 9px; border-radius: 4px; margin: 0 -9px 4px; background: linear-gradient(#999, #999) 82px 2px / 13px 5px no-repeat #fff; }
.low > svg { margin-bottom: 16px; }
.sunk > svg { margin-bottom: 12px; }
.deep > svg { margin-bottom: 8px; }
.r1 > svg { margin-bottom: 18px; }
.r3 > svg { margin-bottom: 20px; }
.r4 > svg { margin-bottom: 21px; }
.r5 > svg { margin-bottom: 22px; }
.r6 > svg { margin-bottom: 23px; }
.petals rect { mix-blend-mode: multiply; opacity: .85; }
.badge {
  position: absolute;
  left: 42px;
  top: -13px;
  width: 88px;
  height: 54px;
  border-radius: 27px;
  background: #eb5a4c;
  color: #fff;
  font-size: 27px;
  letter-spacing: -0.2px;
  display: flex;
  align-items: center;
  justify-content: center;
  box-shadow: 0 2px 4px #0004;
}
.sep { width: 2px; height: 96px; background: #c2beba; margin-bottom: 16px; }
.mini > svg { margin-bottom: 25px; }
.bin > svg { margin-bottom: 25px; }

.tip {
  position: absolute;
  left: 730px;
  top: 1472px;
  width: 148px;
  height: 56px;
  border: 2px solid #111;
  border-radius: 9px;
  background: #6b6663;
  box-shadow: inset 0 0 0 2px #8a8683, 0 2px 10px #0003;
  color: #fff;
  font-size: 27px;
  letter-spacing: 0;
  display: flex;
  align-items: center;
  justify-content: center;
}
.tip svg { position: absolute; left: 54px; top: 51px; }
```
